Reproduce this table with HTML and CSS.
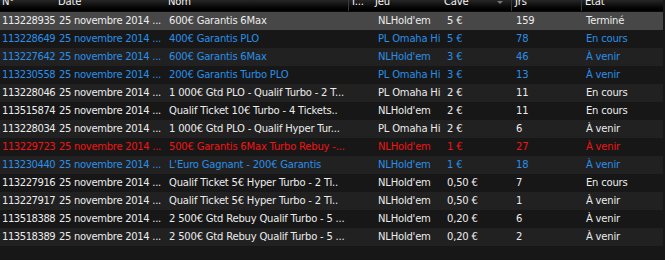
FILE: index.html
```html
<!DOCTYPE html>
<html lang="fr">
<head>
<meta charset="utf-8">
<title>Tournois</title>
<link rel="stylesheet" href="styles.css">
</head>
<body>
<div class="grid">
  <div class="row head">
    <div class="cell"><span>N°</span></div>
    <div class="cell"><span>Date</span></div>
    <div class="cell"><span>Nom</span></div>
    <div class="cell sep"><span>I...</span></div>
    <div class="cell"><span>Jeu</span></div>
    <div class="cell sorted"><span>Cave</span><i class="arrow"></i></div>
    <div class="cell sep"><span>Jrs</span></div>
    <div class="cell sep"><span>Etat</span></div>
  </div>
  <div class="row sel">
    <div class="cell">113228935</div><div class="cell">25 novembre 2014 ...</div><div class="cell">600€ Garantis 6Max</div><div class="cell"></div><div class="cell">NLHold'em</div><div class="cell">5 €</div><div class="cell">159</div><div class="cell">Terminé</div>
  </div>
  <div class="row even blue">
    <div class="cell">113228649</div><div class="cell">25 novembre 2014 ...</div><div class="cell">400€ Garantis PLO</div><div class="cell"></div><div class="cell">PL Omaha Hi</div><div class="cell">5 €</div><div class="cell">78</div><div class="cell">En cours</div>
  </div>
  <div class="row odd blue">
    <div class="cell">113227642</div><div class="cell">25 novembre 2014 ...</div><div class="cell">600€ Garantis 6Max</div><div class="cell"></div><div class="cell">NLHold'em</div><div class="cell">3 €</div><div class="cell">46</div><div class="cell">À venir</div>
  </div>
  <div class="row even blue">
    <div class="cell">113230558</div><div class="cell">25 novembre 2014 ...</div><div class="cell">200€ Garantis Turbo PLO</div><div class="cell"></div><div class="cell">PL Omaha Hi</div><div class="cell">3 €</div><div class="cell">13</div><div class="cell">À venir</div>
  </div>
  <div class="row odd">
    <div class="cell">113228046</div><div class="cell">25 novembre 2014 ...</div><div class="cell">1 000€ Gtd PLO - Qualif Turbo - 2 T...</div><div class="cell"></div><div class="cell">PL Omaha Hi</div><div class="cell">2 €</div><div class="cell">11</div><div class="cell">En cours</div>
  </div>
  <div class="row even">
    <div class="cell">113515874</div><div class="cell">25 novembre 2014 ...</div><div class="cell">Qualif Ticket 10€ Turbo - 4 Tickets..</div><div class="cell"></div><div class="cell">NLHold'em</div><div class="cell">2 €</div><div class="cell">11</div><div class="cell">En cours</div>
  </div>
  <div class="row odd">
    <div class="cell">113228034</div><div class="cell">25 novembre 2014 ...</div><div class="cell">1 000€ Gtd PLO - Qualif Hyper Tur...</div><div class="cell"></div><div class="cell">PL Omaha Hi</div><div class="cell">2 €</div><div class="cell">6</div><div class="cell">À venir</div>
  </div>
  <div class="row even red">
    <div class="cell">113229723</div><div class="cell">25 novembre 2014 ...</div><div class="cell">500€ Garantis 6Max Turbo Rebuy -...</div><div class="cell"></div><div class="cell">NLHold'em</div><div class="cell">1 €</div><div class="cell">27</div><div class="cell">À venir</div>
  </div>
  <div class="row odd blue">
    <div class="cell">113230440</div><div class="cell">25 novembre 2014 ...</div><div class="cell">L'Euro Gagnant - 200€ Garantis</div><div class="cell"></div><div class="cell">NLHold'em</div><div class="cell">1 €</div><div class="cell">18</div><div class="cell">À venir</div>
  </div>
  <div class="row even">
    <div class="cell">113227916</div><div class="cell">25 novembre 2014 ...</div><div class="cell">Qualif Ticket 5€ Hyper Turbo - 2 Ti..</div><div class="cell"></div><div class="cell">NLHold'em</div><div class="cell">0,50 €</div><div class="cell">7</div><div class="cell">En cours</div>
  </div>
  <div class="row odd">
    <div class="cell">113227917</div><div class="cell">25 novembre 2014 ...</div><div class="cell">Qualif Ticket 5€ Hyper Turbo - 2 Ti..</div><div class="cell"></div><div class="cell">NLHold'em</div><div class="cell">0,50 €</div><div class="cell">1</div><div class="cell">À venir</div>
  </div>
  <div class="row even">
    <div class="cell">113518388</div><div class="cell">25 novembre 2014 ...</div><div class="cell">2 500€ Gtd Rebuy Qualif Turbo - 5 ...</div><div class="cell"></div><div class="cell">NLHold'em</div><div class="cell">0,20 €</div><div class="cell">6</div><div class="cell">À venir</div>
  </div>
  <div class="row odd">
    <div class="cell">113518389</div><div class="cell">25 novembre 2014 ...</div><div class="cell">2 500€ Gtd Rebuy Qualif Turbo - 5 ...</div><div class="cell"></div><div class="cell">NLHold'em</div><div class="cell">0,20 €</div><div class="cell">2</div><div class="cell">À venir</div>
  </div>
</div>
</body>
</html>
```

FILE: styles.css
```css
html, body {
  margin: 0;
  padding: 0;
  background: #171717;
  width: 665px;
  height: 260px;
  overflow: hidden;
}
.grid {
  width: 663px;
  font-family: "DejaVu Sans", sans-serif;
  font-size: 10px;
  letter-spacing: -0.2px;
  color: #ececec;
}
.row {
  display: grid;
  grid-template-columns: 56px 110px 182px 25px 69px 69px 70px 1fr;
  height: 18px;
  line-height: 18px;
}
.cell {
  padding-left: 5px;
  white-space: nowrap;
  overflow: hidden;
}
.cell:nth-child(-n+3) {
  padding-left: 3px;
}
.cell:first-child {
  padding-left: 2px;
  letter-spacing: -0.45px;
}
.cell:nth-child(2) {
  letter-spacing: -0.3px;
}
.head {
  height: 11px;
  line-height: 11px;
  background: linear-gradient(#262626, #050505 70%, #000);
  border-bottom: 1px solid #0c0c0c;
  color: #f4f4f4;
}
.head .cell {
  padding-left: 2px;
  position: relative;
  letter-spacing: -0.2px;
}
.head .cell span {
  display: block;
  margin-top: -4px;
}
.head .sep {
  border-left: 1px solid #3a3a3a;
  padding-left: 3px;
}
.arrow {
  position: absolute;
  right: 8px;
  top: 1px;
  width: 0;
  height: 0;
  border-left: 3px solid transparent;
  border-right: 3px solid transparent;
  border-top: 3px solid #777;
}
.sel { background: #474747; }
.odd { background: #212121; }
.even { background: #171717; }
.blue { color: #2a8fe6; }
.red { color: #f01414; }
```
